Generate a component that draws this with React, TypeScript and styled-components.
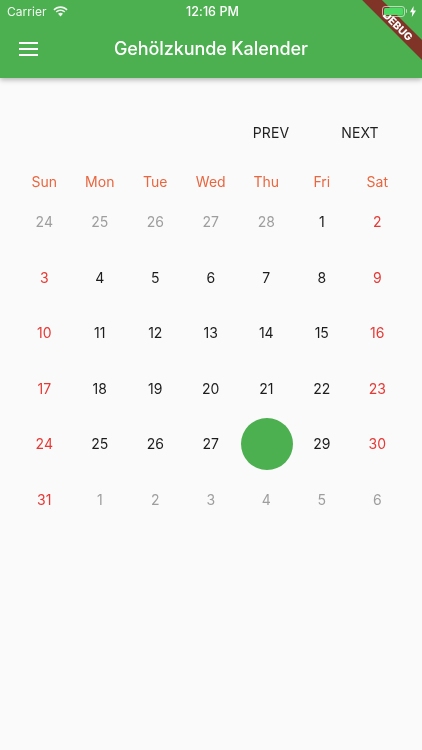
import React from "react";
import styled, { createGlobalStyle } from "styled-components";

const Global = createGlobalStyle`
  html, body { margin: 0; padding: 0; background: #fafafa; }
  body { font-family: Inter, "Liberation Sans", sans-serif; -webkit-font-smoothing: antialiased; }
`;
const Screen = styled.div`
  position: relative; width: 422px; height: 750px; overflow: hidden; background: #fafafa;
  display: flex; flex-direction: column; will-change: transform;
`;
const AppBar = styled.header`
  height: 78px; flex: none; background: #4caf50; color: #fff;
  box-shadow: 0 2px 5px rgba(0,0,0,.28); display: flex; flex-direction: column;
`;
const StatusBar = styled.div`
  position: relative; z-index: 2;
  height: 22px; display: grid; grid-template-columns: 1fr auto 1fr; align-items: center;
  padding: 0 6px 0 7px; font-size: 12px; font-weight: 400; letter-spacing: .05px;
`;
const Carrier = styled.div`display: flex; align-items: center; gap: 6px; opacity: .92;`;
const Clock = styled.div`font-weight: 500; font-size: 12.5px; padding-left: 2px;`;
const Power = styled.div`display: flex; justify-content: flex-end; align-items: center; gap: 5px;`;
const Battery = styled.div`
  position: relative;
  width: 23px; height: 11px; box-sizing: border-box; border: 1px solid rgba(255,255,255,.6); border-radius: 3px; padding: 1px;
  div { width: 100%; height: 100%; background: #4cd964; border-radius: 1.5px; }
  &::after {
    content: ""; position: absolute; right: -3px; top: 2px; width: 1.5px; height: 4px;
    background: rgba(255,255,255,.6); border-radius: 0 1px 1px 0;
  }
`;
const ToolRow = styled.div`
  flex: 1; display: flex; align-items: center; padding: 0 19px 3px; position: relative;
`;
const Menu = styled.svg`width: 20px; height: 20px; flex: none; display: block;`;
const Title = styled.h1`
  margin: 0 0 0 75px; font-size: 18px; font-weight: 500; letter-spacing: -.1px; white-space: nowrap;
`;
const Banner = styled.div`
  position: absolute; z-index: 1; top: 14px; right: -26px; width: 110px; height: 14px;
  transform: rotate(45deg); background: #7f3427; color: #fff;
  font-size: 10.5px; font-weight: 800; display: flex; align-items: center; justify-content: center;
  padding-left: 14px; box-sizing: border-box;
`;
const Main = styled.main`padding: 30px 16px 0 16.5px;`;
const Nav = styled.nav`display: flex; justify-content: flex-end; padding-right: 1.5px; margin-bottom: 16px;`;
const NavButton = styled.button`
  width: 89px; height: 48px; border: 0; background: none; padding: 0; cursor: pointer;
  font: 400 14px Inter, "Liberation Sans", sans-serif; color: #1f1f1f; letter-spacing: .1px;
`;
const Grid = styled.div`display: grid; grid-template-columns: repeat(7, 55.5px); grid-auto-rows: 55.5px;`;
const HeadRow = styled.div`display: grid; grid-template-columns: repeat(7, 55.5px); margin-bottom: 2px;`;
const Head = styled.div`
  height: 20px; text-align: center; font-size: 14px; line-height: 20px; color: #e9663f;
`;
type Tone = "muted" | "day" | "weekend";
const toneColor: Record<Tone, string> = { muted: "#9e9e9e", day: "#1c1c1c", weekend: "#e53935" };
const Cell = styled.div<{ $tone: Tone }>`
  display: flex; align-items: center; justify-content: center;
  font-size: 14px; color: ${p => toneColor[p.$tone]};
`;
const Selected = styled.div`width: 52px; height: 52px; margin: 1px 0 0 1px; border-radius: 50%; background: #4caf50;`;

const weekdays = ["Sun","Mon","Tue","Wed","Thu","Fri","Sat"];
const before = [24,25,26,27,28];
const days: {n:number; tone:Tone}[] = [
  ...before.map(n => ({n, tone:"muted" as Tone})),
  ...Array.from({length:31},(_,i)=>({n:i+1, tone:((i+5)%7===0||(i+5)%7===6?"weekend":"day") as Tone})),
  ...[1,2,3,4,5,6].map(n => ({n, tone:"muted" as Tone})),
];

export default function App() {
  return (
    <Screen>
      <Global />
      <AppBar>
        <StatusBar>
          <Carrier>Carrier
            <svg width="15" height="11" viewBox="0 0 15 11" fill="#fff"><path d="M7.5 2C9.8 2 11.9 2.9 13.5 4.4L14.6 3.2C12.7 1.4 10.2.3 7.5.3S2.3 1.4.4 3.2L1.5 4.4C3.1 2.9 5.2 2 7.5 2Z"/><path d="M7.5 5.1c1.4 0 2.7.5 3.7 1.5l1.1-1.2C11 4.1 9.3 3.4 7.5 3.4S4 4.1 2.7 5.4l1.1 1.2c1-1 2.3-1.5 3.7-1.5Z"/><path d="M7.5 6.8c-1 0-1.8.4-2.5 1l2.5 2.7L10 7.8c-.7-.6-1.5-1-2.5-1Z"/></svg>
          </Carrier>
          <Clock>12:16 PM</Clock>
          <Power>
            <Battery><div /></Battery>
            <svg width="6" height="11" viewBox="0 0 6 11" fill="#fff"><path d="M3.6 0 0 6.2h2.3L1.8 11 6 4.4H3.4Z"/></svg>
          </Power>
        </StatusBar>
        <ToolRow>
          <Menu viewBox="0 0 20 20" fill="#fff"><rect x="0" y="3" width="19" height="2"/><rect x="0" y="9" width="19" height="2"/><rect x="0" y="15" width="19" height="2"/></Menu>
          <Title>Gehölzkunde Kalender</Title>
        </ToolRow>
      </AppBar>
      <Banner>DEBUG</Banner>
      <Main>
        <Nav>
          <NavButton>PREV</NavButton>
          <NavButton>NEXT</NavButton>
        </Nav>
        <HeadRow>{weekdays.map(d => <Head key={d}>{d}</Head>)}</HeadRow>
        <Grid>
          {days.map((d,i) => (
            <Cell key={i} $tone={d.tone}>{d.n === 28 && d.tone === "day" ? <Selected /> : d.n}</Cell>
          ))}
        </Grid>
      </Main>
    </Screen>
  );
}
